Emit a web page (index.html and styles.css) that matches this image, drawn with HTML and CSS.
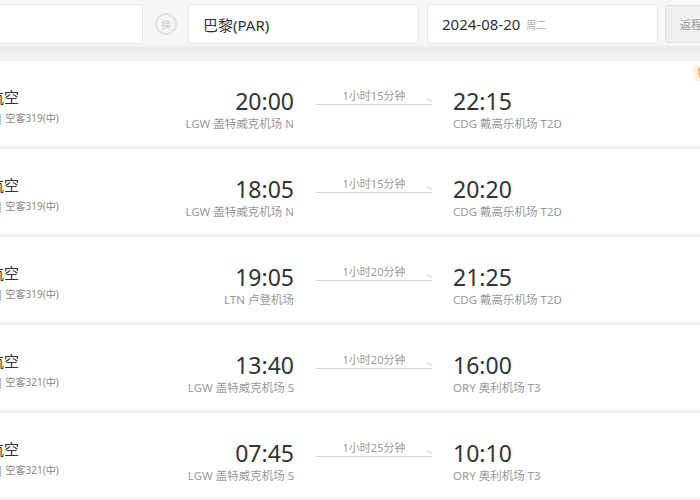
FILE: index.html
```html
<!DOCTYPE html>
<html lang="zh-CN">
<head>
    <meta charset="UTF-8">
    <meta name="viewport" content="width=device-width, initial-scale=1.0">
    <title>伦敦 - 巴黎 航班</title>
    <link rel="stylesheet" href="styles.css">
</head>
<body>
    <div class="wrapper">
        <div class="search-bar">
            <div class="field field-city">伦敦(LON)</div>
            <div class="swap">换</div>
            <div class="field field-city">巴黎(PAR)</div>
            <div class="field field-date">2024-08-20 <span class="week">周二</span></div>
            <div class="return-btn">返程</div>
        </div>

        <div class="flight-list">
            <div class="flight">
                <div class="airline">
                    <div class="airline-name">英国航空</div>
                    <div class="plane">BA2668 | 空客319(中)</div>
                </div>
                <div class="depart">
                    <div class="time">20:00</div>
                    <div class="airport">LGW 盖特威克机场 N</div>
                </div>
                <div class="duration">
                    <div class="duration-text">1小时15分钟</div>
                    <div class="duration-line"></div>
                </div>
                <div class="arrive">
                    <div class="time">22:15</div>
                    <div class="airport">CDG 戴高乐机场 T2D</div>
                </div>
                <span class="tag">特价</span>
            </div>

            <div class="flight">
                <div class="airline">
                    <div class="airline-name">英国航空</div>
                    <div class="plane">BA2672 | 空客319(中)</div>
                </div>
                <div class="depart">
                    <div class="time">18:05</div>
                    <div class="airport">LGW 盖特威克机场 N</div>
                </div>
                <div class="duration">
                    <div class="duration-text">1小时15分钟</div>
                    <div class="duration-line"></div>
                </div>
                <div class="arrive">
                    <div class="time">20:20</div>
                    <div class="airport">CDG 戴高乐机场 T2D</div>
                </div>
            </div>

            <div class="flight">
                <div class="airline">
                    <div class="airline-name">易捷航空</div>
                    <div class="plane">U22131 | 空客319(中)</div>
                </div>
                <div class="depart">
                    <div class="time">19:05</div>
                    <div class="airport">LTN 卢登机场</div>
                </div>
                <div class="duration">
                    <div class="duration-text">1小时20分钟</div>
                    <div class="duration-line"></div>
                </div>
                <div class="arrive">
                    <div class="time">21:25</div>
                    <div class="airport">CDG 戴高乐机场 T2D</div>
                </div>
            </div>

            <div class="flight">
                <div class="airline">
                    <div class="airline-name">易捷航空</div>
                    <div class="plane">U28041 | 空客321(中)</div>
                </div>
                <div class="depart">
                    <div class="time">13:40</div>
                    <div class="airport">LGW 盖特威克机场 S</div>
                </div>
                <div class="duration">
                    <div class="duration-text">1小时20分钟</div>
                    <div class="duration-line"></div>
                </div>
                <div class="arrive">
                    <div class="time">16:00</div>
                    <div class="airport">ORY 奥利机场 T3</div>
                </div>
            </div>

            <div class="flight">
                <div class="airline">
                    <div class="airline-name">易捷航空</div>
                    <div class="plane">U28001 | 空客321(中)</div>
                </div>
                <div class="depart">
                    <div class="time">07:45</div>
                    <div class="airport">LGW 盖特威克机场 S</div>
                </div>
                <div class="duration">
                    <div class="duration-text">1小时25分钟</div>
                    <div class="duration-line"></div>
                </div>
                <div class="arrive">
                    <div class="time">10:10</div>
                    <div class="airport">ORY 奥利机场 T3</div>
                </div>
            </div>
        </div>
    </div>
</body>
</html>
```

FILE: styles.css
```css
* { box-sizing: border-box; }
body {
    margin: 0;
    padding: 0;
    font-family: "Noto Sans", "Noto Sans CJK SC", sans-serif;
    background: #f0f0f0;
    color: #333;
    overflow: hidden;
}
.wrapper {
    margin-left: -88px;
    width: 1000px;
}
.search-bar {
    display: flex;
    align-items: center;
    padding: 4px 0 17px;
    background: linear-gradient(#f7f7f7 0, #f7f7f7 44px, #ebebeb 48px, #f2f2f2 57px);
}
.field {
    height: 40px;
    background: #fff;
    border: 1px solid #e8e8e8;
    border-radius: 3px;
    display: flex;
    align-items: center;
    padding-left: 14px;
    font-size: 15px;
    width: 231px;
}
.field-date { margin-left: 8px; }
.week {
    font-size: 10px;
    color: #aaa;
    margin-left: 6px;
}
.swap {
    width: 22px;
    height: 22px;
    margin: 0 11px 0 12px;
    border: 2px solid #e2e2e2;
    border-radius: 50%;
    font-size: 10px;
    color: #c8c8c8;
    display: flex;
    align-items: center;
    justify-content: center;
}
.return-btn {
    height: 38px;
    width: 90px;
    margin-left: 7px;
    background: #f0f0f0;
    border: 1px solid #e4e4e4;
    border-radius: 3px;
    font-size: 11px;
    color: #999;
    display: flex;
    align-items: center;
    padding-left: 14px;
}
.flight {
    position: relative;
    display: flex;
    height: 85px;
    margin-bottom: 3px;
    background: #fff;
    padding: 26px 0 0 47px;
}
.airline { width: 190px; }
.airline-name {
    font-size: 15px;
    line-height: 20px;
}
.plane {
    margin-top: 4px;
    font-size: 10px;
    line-height: 14px;
    color: #888;
}
.depart {
    width: 145px;
    text-align: right;
}
.time {
    font-size: 23px;
    line-height: 28px;
    color: #333;
}
.airport {
    margin-top: 1px;
    font-size: 11.5px;
    line-height: 16px;
    color: #999;
    white-space: nowrap;
}
.duration {
    width: 116px;
    margin: 2px 21px 0 22px;
    text-align: center;
}
.duration-text {
    font-size: 11px;
    line-height: 14px;
    color: #999;
}
.duration-line {
    position: relative;
    margin-top: 1px;
    height: 1px;
    background: #d4d4d4;
}
.duration-line::after {
    content: "";
    position: absolute;
    right: 0;
    top: -3px;
    width: 6px;
    height: 1px;
    background: #d4d4d4;
    transform: rotate(30deg);
    transform-origin: right center;
}
.arrive { width: 150px; }
.tag {
    position: absolute;
    left: 781px;
    top: 4px;
    font-size: 11px;
    line-height: 14px;
    padding: 1px 4px;
    background: #fff1e4;
    color: #ff9a3c;
    border-radius: 2px;
}
```
